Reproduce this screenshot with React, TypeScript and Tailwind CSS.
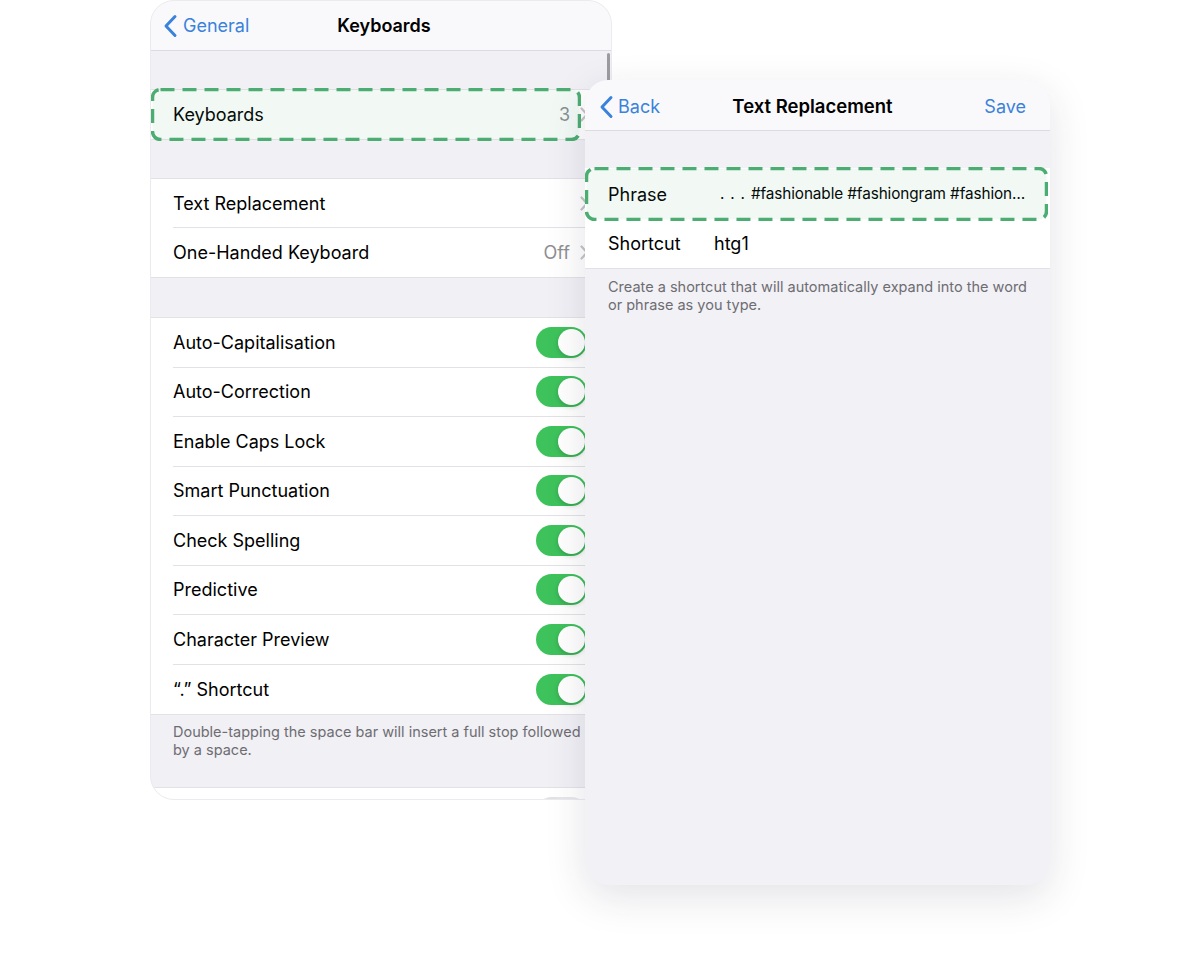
import clsx from 'clsx';

const TOGGLES = [
    'Auto-Capitalisation',
    'Auto-Correction',
    'Enable Caps Lock',
    'Smart Punctuation',
    'Check Spelling',
    'Predictive',
    'Character Preview',
    '\u201C.\u201D Shortcut',
];

function BackChevron() {
    return (
        <svg width="15" height="24" viewBox="0 0 15 24" fill="none" className="shrink-0">
            <path d="M12 2.5 L3 12 L12 21.5" stroke="currentColor" strokeWidth="3" strokeLinecap="round" strokeLinejoin="round" />
        </svg>
    );
}

function Disclosure() {
    return (
        <svg width="9" height="15" viewBox="0 0 9 15" fill="none" className="shrink-0">
            <path d="M1.5 1.5 L7 7.5 L1.5 13.5" stroke="#c4c4c7" strokeWidth="2.2" strokeLinecap="round" strokeLinejoin="round" />
        </svg>
    );
}

function Toggle({ on = true }: { on?: boolean }) {
    return (
        <div className={clsx('relative h-[31px] w-[51px] shrink-0 rounded-full', on ? 'bg-[#3ec35c]' : 'bg-[#e6e6ea]')}>
            <div
                className={clsx(
                    'absolute top-[2px] h-[27px] w-[27px] rounded-full bg-white shadow-[0_2px_5px_rgba(0,0,0,0.18)]',
                    on ? 'left-[22px]' : 'left-[2px]',
                )}
            />
        </div>
    );
}

// green dashed highlight drawn over a row
function Highlight() {
    return (
        <svg className="pointer-events-none absolute inset-0 h-full w-full" preserveAspectRatio="none">
            <rect
                x="1.5"
                y="1.5"
                width="calc(100% - 3px)"
                height="calc(100% - 3px)"
                rx="8"
                fill="rgba(76,175,114,0.07)"
                stroke="#4cad72"
                strokeWidth="3.5"
                strokeDasharray="14 8"
            />
        </svg>
    );
}

function KeyboardsScreen() {
    return (
        <div className="absolute left-[150px] top-0 flex h-[800px] w-[462px] flex-col overflow-hidden rounded-[24px] border border-[#ebebef] bg-[#f1f0f5]">
            {/* Nav bar */}
            <div className="flex h-[50px] shrink-0 items-center border-b border-[#dcdce0] bg-[#f9f9fb] px-[12px]">
                <div className="flex w-[138px] items-center gap-[5px] text-[18px] text-[#3a82dc]">
                    <BackChevron />
                    General
                </div>
                <div className="w-[166px] text-center text-[18px] font-semibold text-black">Keyboards</div>
            </div>

            {/* scroll indicator */}
            <div className="absolute right-[1px] top-[52px] h-[40px] w-[3px] rounded-full bg-[#9c9ca0]" />

            <div className="h-[38px] shrink-0" />

            <div className="relative flex h-[51px] shrink-0 items-center justify-between border-y border-[#e2e2e6] bg-white pl-[22px] pr-[22px] text-[18px]">
                <span>Keyboards</span>
                <span className="flex items-center gap-[10px] text-[#8e8e93]">
                    3
                    <Disclosure />
                </span>
                <div className="absolute -top-[2px] bottom-[-2px] left-0 w-[430px]">
                    <Highlight />
                </div>
            </div>

            <div className="h-[38px] shrink-0" />

            <div className="shrink-0 border-y border-[#e2e2e6] bg-white">
                <div className="flex h-[49px] items-center pl-[22px] text-[18px]">
                    <div className="flex h-full flex-1 items-center justify-between border-b border-[#e2e2e6] pr-[22px]">
                        <span>Text Replacement</span>
                        <Disclosure />
                    </div>
                </div>
                <div className="flex h-[49px] items-center justify-between pl-[22px] pr-[22px] text-[18px]">
                    <span>One-Handed Keyboard</span>
                    <span className="flex items-center gap-[10px] text-[#8e8e93]">
                        Off
                        <Disclosure />
                    </span>
                </div>
            </div>

            <div className="h-[39px] shrink-0" />

            <div className="shrink-0 border-y border-[#e2e2e6] bg-white">
                {TOGGLES.map((label, i) => (
                    <div key={label} className="flex h-[49.5px] items-center pl-[22px] text-[18px]">
                        <div
                            className={clsx(
                                'flex h-full flex-1 items-center justify-between pr-[24px]',
                                i < TOGGLES.length - 1 && 'border-b border-[#e2e2e6]',
                            )}
                        >
                            <span>{label}</span>
                            <Toggle />
                        </div>
                    </div>
                ))}
            </div>

            <div className="h-[72px] shrink-0 px-[22px] pt-[8px] text-[14.5px] leading-[18px] text-[#6d6d72]">
                Double-tapping the space bar will insert a full stop followed by a space.
            </div>

            <div className="flex h-[50px] shrink-0 items-center justify-end border-t border-[#e2e2e6] bg-white pr-[24px]">
                <Toggle on={false} />
            </div>
        </div>
    );
}

function ReplacementScreen() {
    return (
        <div className="absolute left-[585px] top-[80px] flex h-[805px] w-[465px] flex-col overflow-hidden rounded-[24px] bg-[#f2f1f6] shadow-[0_12px_40px_rgba(40,40,70,0.13)]">
            <div className="flex h-[51px] shrink-0 items-center justify-between border-b border-[#dcdce0] bg-[#f9f9fb] pl-[14px] pr-[24px] pt-[3px] text-[18px]">
                <div className="flex w-[110px] items-center gap-[4px] text-[#3a82dc]">
                    <BackChevron />
                    Back
                </div>
                <div className="text-[18.5px] font-semibold text-black">Text Replacement</div>
                <div className="w-[110px] text-right text-[#3a82dc]">Save</div>
            </div>

            <div className="h-[37px] shrink-0" />

            <div className="shrink-0 border-b border-[#e2e2e6] bg-white">
                <div className="relative flex h-[51px] items-center pl-[23px] pr-[20px] pt-[1px]">
                    <span className="w-[112px] shrink-0 text-[18px]">Phrase</span>
                    <span className="whitespace-nowrap text-[15.3px] tracking-[-0.1px]">
                        <span className="tracking-[0.8px]">. . . </span>#fashionable #fashiongram #fashion…
                    </span>
                    <div className="absolute -top-[1px] bottom-[-2px] left-0 right-[2px]">
                        <Highlight />
                    </div>
                </div>
                <div className="flex h-[49px] items-center pl-[23px] text-[18px]">
                    <span className="w-[106px] shrink-0">Shortcut</span>
                    <span>htg1</span>
                </div>
            </div>

            <div className="px-[23px] pt-[9px] text-[14.5px] leading-[18px] text-[#6d6d72]">
                Create a shortcut that will automatically expand into the word or phrase as you type.
            </div>
        </div>
    );
}

export default function App() {
    return (
        <div className="relative h-[958px] w-[1200px] overflow-hidden bg-white font-['Inter','Noto_Sans',sans-serif] text-black">
            <KeyboardsScreen />
            <ReplacementScreen />
        </div>
    );
}
